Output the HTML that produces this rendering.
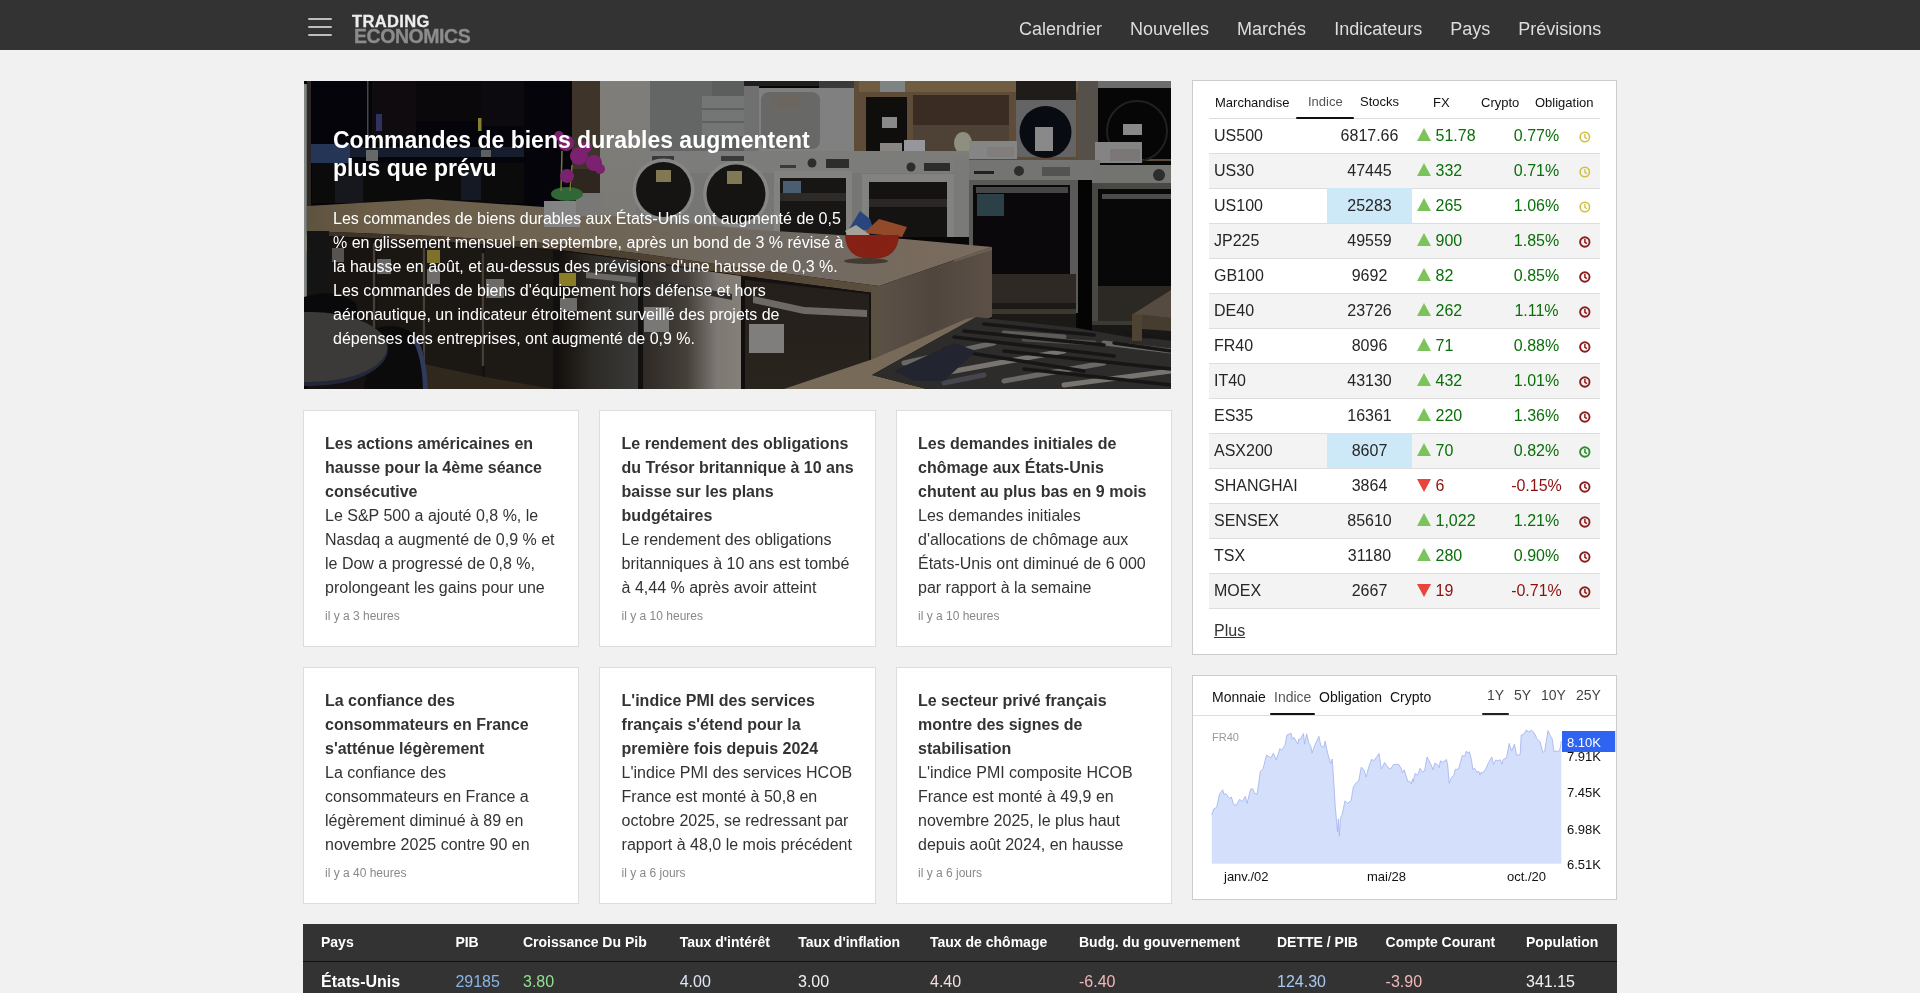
<!DOCTYPE html>
<html lang="fr">
<head>
<meta charset="utf-8">
<title>TRADING ECONOMICS | 20 millions INDICATEURS DE 196 PAYS</title>
<style>
*{box-sizing:border-box;margin:0;padding:0}
html,body{width:1920px;height:993px;overflow:hidden;background:#f1f1f1;font-family:"Liberation Sans",Arial,sans-serif;color:#333;font-size:16px;line-height:24px}
a{color:inherit;text-decoration:none}
.abs{position:absolute}
#wrap{position:absolute;left:0;top:0;width:1920px;height:993px;overflow:hidden;will-change:transform}
/* NAV */
#nav{position:absolute;left:0;top:0;width:1920px;height:50px;background:#333}
#burger{position:absolute;left:308px;top:18px;width:24px;height:19px}
#burger i{position:absolute;left:0;width:24px;height:2px;background:#bdbdbd;border-radius:1px}
#logo{position:absolute;left:352px;top:14px;font-weight:bold;line-height:15px}
#logo .t{display:block;font-size:16.5px;color:#ededed;height:15px;letter-spacing:0.38px;-webkit-text-stroke:0.3px #ededed}
#logo .e{display:block;font-size:19.5px;color:#8c8c8c;height:17px;margin-left:2px;letter-spacing:-0.45px;-webkit-text-stroke:0.3px #8c8c8c}
#menu{position:absolute;top:0;left:1005px;height:50px;display:flex}
#menu a{display:block;font-size:18px;line-height:20px;color:#ddd;padding:19px 14px 0 14px;white-space:nowrap}
/* HERO */
#hero{position:absolute;left:304px;top:81px;width:867px;height:308px;overflow:hidden;background:#2a2522}
#hero svg{position:absolute;left:0;top:0}
#hero h1{position:absolute;left:29px;top:45px;font-size:23px;line-height:28px;font-weight:bold;color:#fff;width:520px}
#hero p{position:absolute;left:29px;top:126px;width:520px;font-size:16px;line-height:24px;color:#fff}
/* CARDS */
.card{position:absolute;width:276px;height:237px;background:#fff;border:1px solid #ddd}
.card h3{position:absolute;left:21px;top:21px;width:234px;font-size:16px;line-height:24px;font-weight:bold;color:#333}
.card h3 span{font-weight:normal;display:block}
.card small{position:absolute;left:21px;top:196px;font-size:12px;line-height:18px;color:#888}
.c2 h3,.c2 small{left:21.6px}
/* MARKETS */
.panel{position:absolute;background:#fff;border:1px solid #ccc}
#mk{left:1192px;top:80px;width:425px;height:575px}
#mk .tabs a{position:absolute;top:13px;font-size:13px;line-height:18px;color:#111;white-space:nowrap}
#mk .hr{position:absolute;left:16px;top:37px;width:391px;height:1px;background:#ddd}
#mk .ul{position:absolute;left:103px;top:36px;width:58px;height:2px;background:#111;border-radius:1px}
#mt{position:absolute;left:16px;top:38px;width:391px;border-collapse:separate;border-spacing:0;font-size:16px;line-height:24px;color:#262626}
#mt tr{height:35px}
#mt td{border-bottom:1px solid #ddd;padding:0;white-space:nowrap;vertical-align:middle;height:35px}
#mt tr:nth-child(even) td{background:#f3f3f3}
#mt td.n{padding-left:5px;width:118px}
#mt td.v{text-align:center;width:85px}
#mt td.c{width:90px;padding-left:5px}
#mt td.p{text-align:center;width:69px}
#mt td.k{text-align:right;padding-right:9px}
#mt td.fl{background:#cde9f7 !important}
.up{color:#0a6e0a}.dn{color:#8b1010}
.tu,.td{display:inline-block;width:0;height:0;border-left:7px solid transparent;border-right:7px solid transparent;margin-right:4.5px;position:relative}
.tu{border-bottom:13px solid #7cc35c;top:0px}
.td{border-top:13px solid #e8453c;top:1px}
.ck{display:inline-block;vertical-align:middle}
#plus{position:absolute;left:21px;top:538px;font-size:16px;text-decoration:underline;color:#333}
/* CHART */
#ch{left:1192px;top:675px;width:425px;height:225px}
#ch .tabs a{position:absolute;font-size:14px;line-height:18px;color:#111;white-space:nowrap}
#ch svg{position:absolute;left:0;top:0}
/* TABLE */
#tb{position:absolute;left:303px;top:924px;width:1314px;height:80px;background:#333;color:#fff}
#tb .hl{position:absolute;left:0;top:37px;width:1314px;height:1px;background:#111}
#tb b{position:absolute;top:8px;font-size:14px;line-height:20px;white-space:nowrap;color:#fff}
#tb span{position:absolute;top:46px;font-size:16px;line-height:24px;white-space:nowrap}
</style>
</head>
<body>
<div id="wrap">
<div id="nav">
  <div id="burger"><i style="top:0"></i><i style="top:8px"></i><i style="top:16px"></i></div>
  <a id="logo"><span class="t">TRADING</span><span class="e">ECONOMICS</span></a>
  <div id="menu"><a>Calendrier</a><a>Nouvelles</a><a>Marchés</a><a>Indicateurs</a><a>Pays</a><a>Prévisions</a></div>
</div>

<div id="hero">
  <!--HS--><svg width="867" height="308" viewBox="0 0 867 308"><defs>
<filter id="hb" x="-2%" y="-2%" width="104%" height="104%" color-interpolation-filters="sRGB"><feGaussianBlur stdDeviation="0.7"/></filter>
<linearGradient id="gwall" x1="0" y1="0" x2="0" y2="1"><stop offset="0" stop-color="#7f7e7a"/><stop offset="1" stop-color="#7a7974"/></linearGradient>
<linearGradient id="gcnt" x1="0" y1="0" x2="1" y2="0"><stop offset="0" stop-color="#5e5240"/><stop offset="0.1" stop-color="#6c5e48"/><stop offset="0.4" stop-color="#6e6454"/><stop offset="0.72" stop-color="#706a64"/><stop offset="0.9" stop-color="#786a5c"/><stop offset="1" stop-color="#7a6c5e"/></linearGradient>
<linearGradient id="gedge" x1="0" y1="0" x2="1" y2="0"><stop offset="0" stop-color="#3a3024"/><stop offset="1" stop-color="#5c4e3d"/></linearGradient>
<linearGradient id="gdw1" x1="0" y1="0" x2="1" y2="0"><stop offset="0" stop-color="#14100c"/><stop offset="0.4" stop-color="#2d2a26"/><stop offset="1" stop-color="#3a3a38"/></linearGradient>
<linearGradient id="gdw2" x1="0" y1="0" x2="1" y2="0"><stop offset="0" stop-color="#2e2925"/><stop offset="0.45" stop-color="#46403a"/><stop offset="0.75" stop-color="#7d7873"/><stop offset="1" stop-color="#857f78"/></linearGradient>
<linearGradient id="gdw3" x1="0" y1="0" x2="0" y2="1"><stop offset="0" stop-color="#241f1b"/><stop offset="1" stop-color="#2a241e"/></linearGradient>
<linearGradient id="gisl" x1="0" y1="0" x2="1" y2="0"><stop offset="0" stop-color="#5c5248"/><stop offset="0.5" stop-color="#50463e"/><stop offset="1" stop-color="#5c5046"/></linearGradient>
</defs><g filter="url(#hb)"><rect x="0" y="0" width="867" height="308" fill="#080708"/><rect x="0" y="0" width="268" height="130" fill="#05040a"/><rect x="68" y="0" width="44" height="62" fill="#100b0e"/><rect x="112" y="0" width="66" height="40" fill="#0a080a"/><rect x="178" y="0" width="42" height="45" fill="#0d0a0f"/><rect x="8" y="82" width="212" height="40" fill="#0c0b0c"/><rect x="31" y="95" width="28" height="27" fill="#16181e"/><rect x="157" y="87" width="20" height="32" fill="#151923"/><rect x="3" y="63" width="43" height="19" fill="#253555"/><rect x="46" y="66" width="174" height="10" fill="#161e2e"/><rect x="62" y="69" width="12" height="11" fill="#686869"/><rect x="177" y="69" width="10" height="7" fill="#5f5f60"/><rect x="174" y="37" width="3.5" height="13" fill="#867f32"/><rect x="63" y="0" width="1.5" height="66" fill="#434546"/><rect x="72" y="33" width="6" height="17" fill="#2f325e"/><rect x="268" y="0" width="28" height="88" fill="#3e342a"/><rect x="268" y="88" width="28" height="42" fill="#2e261f"/><rect x="296" y="0" width="50" height="150" fill="url(#gwall)"/><rect x="346" y="0" width="62" height="75" fill="#646666"/><rect x="408" y="0" width="32" height="75" fill="#5c5e5e"/><rect x="398" y="15" width="42" height="40" fill="#747676"/><rect x="398" y="27" width="42" height="2" fill="#5e6062"/><rect x="398" y="40" width="42" height="2" fill="#5e6062"/><rect x="440" y="0" width="15" height="75" fill="#707070"/><rect x="440" y="0" width="75" height="5" fill="#201f1e"/><rect x="515" y="0" width="35" height="7" fill="#3a3a3a"/><rect x="455" y="7" width="95" height="65" fill="#808081"/><rect x="457" y="11" width="59" height="57" rx="8" fill="#686866"/><rect x="470" y="14" width="27" height="14" fill="#6b6760"/><rect x="550" y="0" width="320" height="80" fill="#5e4c38"/><rect x="555" y="0" width="315" height="11" fill="#705c40"/><rect x="576" y="0" width="25" height="11" fill="#7e8383"/><rect x="562" y="16" width="41" height="54" fill="#0f0e0d"/><rect x="578" y="36" width="15" height="11" fill="#898989"/><rect x="609" y="14" width="96" height="46" fill="#3a2c22"/><rect x="609" y="44" width="96" height="28" fill="#4e4236"/><rect x="576" y="62" width="22" height="11" fill="#898684"/><rect x="600" y="59" width="21" height="14" fill="#96969b"/><ellipse cx="659" cy="62" rx="9" ry="11" fill="#8f8f80"/><rect x="712" y="0" width="60" height="19" fill="#201c1a"/><rect x="712" y="19" width="60" height="57" fill="#646464"/><circle cx="741.5" cy="51" r="26" fill="#080b11"/><rect x="731" y="46" width="18" height="24" fill="#898989"/><rect x="774" y="0" width="20" height="80" fill="#555049"/><rect x="794" y="0" width="73" height="7" fill="#6c6c6a"/><rect x="794" y="7" width="73" height="71" fill="#060606"/><circle cx="833" cy="50" r="30" fill="none" stroke="#212121" stroke-width="2"/><rect x="819" y="43" width="19" height="11" fill="#898989"/><rect x="665" y="60" width="48" height="18" fill="#858585"/><rect x="791" y="61" width="47" height="21" fill="#848484"/><rect x="683" y="66" width="27" height="10" fill="#827d7d"/><rect x="806" y="68" width="30" height="12" fill="#7c7777"/><rect x="332" y="70" width="333" height="86" fill="#767674"/><rect x="332" y="70" width="333" height="22" fill="#7c7c7a"/><rect x="348" y="75" width="22" height="5" fill="#3a3a3a"/><rect x="417" y="75" width="23" height="5" fill="#3a3a3a"/><circle cx="359.5" cy="108.5" r="31" fill="#868684"/><circle cx="359.5" cy="108.5" r="27.5" fill="#161413"/><circle cx="432" cy="113" r="33" fill="#868684"/><circle cx="432" cy="113" r="29.5" fill="#161413"/><rect x="352" y="89" width="15" height="12" fill="#817854"/><rect x="423" y="90" width="15" height="13" fill="#817854"/><rect x="522" y="78" width="23" height="9" fill="#2d2d2d"/><rect x="620" y="82" width="26" height="8" fill="#2d2d2d"/><rect x="476" y="84" width="16" height="3" fill="#3a3a3a"/><circle cx="508" cy="82" r="4.5" fill="#2d2d2d"/><circle cx="607" cy="86" r="4.5" fill="#2d2d2d"/><rect x="470" y="90" width="78" height="66" fill="#828280"/><rect x="476" y="97" width="66" height="59" fill="#171615"/><rect x="558" y="93" width="92" height="63" fill="#828280"/><rect x="565" y="101" width="78" height="55" fill="#141312"/><rect x="476" y="112" width="66" height="8" fill="#2d2a28"/><rect x="565" y="118" width="78" height="8" fill="#2a2726"/><rect x="479" y="100" width="18" height="12" fill="#4a5e71"/><rect x="650" y="76" width="15" height="80" fill="#7a7a78"/><rect x="665" y="79" width="131" height="20" fill="#747472"/><rect x="788" y="84" width="79" height="18" fill="#737370"/><rect x="665" y="99" width="109" height="133" fill="#5a5a58"/><rect x="669" y="104" width="97" height="89" fill="#0a080a"/><rect x="672" y="106" width="92" height="6" fill="#464646"/><rect x="668" y="193" width="104" height="29" fill="#2e2925"/><rect x="688" y="222" width="84" height="28" fill="#1c1a17"/><rect x="788" y="236" width="79" height="24" fill="#1a1816"/><rect x="788" y="238" width="42" height="6" fill="#3c3a34"/><rect x="688" y="228" width="84" height="5" fill="#3c3830"/><rect x="774" y="99" width="14" height="151" fill="#040404"/><rect x="788" y="102" width="79" height="138" fill="#4a4845"/><rect x="794" y="108" width="73" height="97" fill="#090809"/><rect x="798" y="113" width="69" height="5" fill="#4b4b4b"/><rect x="794" y="205" width="73" height="35" fill="#2c2824"/><rect x="673" y="113" width="27" height="22" fill="#2c4048"/><rect x="738" y="86" width="28" height="9" fill="#535353"/><circle cx="715" cy="90" r="5" fill="#2d2d2d"/><circle cx="855" cy="94" r="6" fill="#2d2d2d"/><rect x="670" y="90" width="20" height="3" fill="#212121"/><polygon points="3,125 124,118 268,128 300,134 440,148 600,158 688,166 575,205 440,187 340,173 256,163 130,155 3,150" fill="url(#gcnt)"/><polygon points="3,150 130,155 256,163 340,173 440,187 575,205 569,212 440,195 340,180 256,169 130,160 3,154" fill="url(#gedge)"/><polygon points="3,154 130,160 256,169 340,180 440,195 569,212 569,308 3,308" fill="#141110"/><polygon points="25,156 68,158 68,280 25,270" fill="#181411"/><polygon points="73,158 119,160 119,290 73,282" fill="#1a1612"/><polygon points="122,161 178,164 178,300 122,292" fill="#1b1713"/><polygon points="181,165 249,169 249,308 181,304" fill="#1d1915"/><polygon points="255,170 334,180 334,308 255,308" fill="url(#gdw1)"/><polygon points="339,181 437,195 437,308 339,308" fill="url(#gdw2)"/><polygon points="441,199 565,213 565,308 441,308" fill="url(#gdw3)"/><rect x="68.8" y="162.3" width="2.4" height="122.7" fill="#453f38"/><rect x="118.8" y="166.8" width="2.4" height="118.2" fill="#453f38"/><rect x="177.8" y="172.11" width="2.4" height="112.89" fill="#453f38"/><rect x="249" y="170" width="6" height="138" fill="#12100e"/><rect x="334" y="181" width="5" height="127" fill="#12100e"/><rect x="437" y="198" width="4" height="110" fill="#100e0d"/><polygon points="282,191 332,196 332,202 282,197" fill="#6b6865"/><polygon points="350,199 428,213 428,219 350,204" fill="#2d2c2a"/><polygon points="449,215 500,226 563,229 563,236 500,233 449,222" fill="#6d6a66"/><rect x="28" y="167" width="12" height="14" fill="#565453"/><rect x="73" y="178" width="14" height="15" fill="#676666"/><rect x="123" y="169" width="13" height="13" fill="#7f702a"/><rect x="123" y="188" width="13" height="15" fill="#6e6d6c"/><rect x="182" y="198" width="18" height="19" fill="#6b6a69"/><rect x="255" y="192" width="17" height="13" fill="#8b7c27"/><rect x="256" y="217" width="17" height="13" fill="#6e6c6b"/><rect x="340" y="226" width="25" height="25" fill="#797877"/><rect x="445" y="243" width="35" height="29" fill="#807e7d"/><rect x="0" y="154" width="4" height="16" fill="#867c2c"/><polygon points="100,286 249,308 100,308" fill="#30281c"/><polygon points="120,283 181,296 249,308 120,308" fill="#30281c"/><rect x="0" y="3" width="2.8" height="213" fill="#828784"/><rect x="3" y="0" width="4" height="125" fill="#2e2824"/><rect x="3" y="150" width="22" height="90" fill="#141415"/><path d="M0 216 Q30 206 52 222 L56 250 L0 250Z" fill="#09090b"/><path d="M70 248 Q100 238 118 262 L124 308 L60 308Z" fill="#0b0b0c"/><path d="M112 256 Q122 270 124 308 L119 308 Q118 275 108 258Z" fill="#303a5b"/><ellipse cx="6" cy="268" rx="78" ry="37" fill="#22283a"/><ellipse cx="6" cy="266" rx="77" ry="35" fill="#3c3a38"/><polygon points="575,205 688,166 688,236 569,280" fill="url(#gisl)"/><polygon points="567,205 575,205 575,278 567,281" fill="#5a5040"/><polygon points="688,166 650,179 650,181 688,169" fill="#695f53"/><polygon points="480,308 569,278 662,238 672,236 568,294 623,308" fill="#786a58"/><polygon points="568,294 672,236 773,247 829,257 867,258 867,308 623,308" fill="#2d2c2a"/><line x1="600" y1="282" x2="690" y2="262" stroke="#6b6965" stroke-width="5" stroke-linecap="round"/><line x1="640" y1="292" x2="760" y2="270" stroke="#787571" stroke-width="5" stroke-linecap="round"/><line x1="700" y1="300" x2="800" y2="282" stroke="#6b6965" stroke-width="5" stroke-linecap="round"/><line x1="760" y1="304" x2="867" y2="290" stroke="#787571" stroke-width="5" stroke-linecap="round"/><line x1="700" y1="252" x2="760" y2="256" stroke="#5f5c58" stroke-width="5" stroke-linecap="round"/><line x1="800" y1="262" x2="867" y2="270" stroke="#6b6965" stroke-width="5" stroke-linecap="round"/><line x1="640" y1="302" x2="680" y2="294" stroke="#46464e" stroke-width="5" stroke-linecap="round"/><line x1="720" y1="258" x2="790" y2="262" stroke="#52504c" stroke-width="5" stroke-linecap="round"/><line x1="680" y1="243" x2="790" y2="254" stroke="#171616" stroke-width="3.5" stroke-linecap="round"/><line x1="660" y1="250" x2="800" y2="264" stroke="#171616" stroke-width="3.5" stroke-linecap="round"/><line x1="650" y1="256" x2="810" y2="275" stroke="#171616" stroke-width="3.5" stroke-linecap="round"/><line x1="700" y1="270" x2="867" y2="288" stroke="#171616" stroke-width="3.5" stroke-linecap="round"/><line x1="640" y1="268" x2="780" y2="290" stroke="#171616" stroke-width="3.5" stroke-linecap="round"/><line x1="720" y1="288" x2="867" y2="304" stroke="#171616" stroke-width="3.5" stroke-linecap="round"/><line x1="820" y1="252" x2="867" y2="258" stroke="#171616" stroke-width="3.5" stroke-linecap="round"/><line x1="810" y1="262" x2="867" y2="270" stroke="#171616" stroke-width="3.5" stroke-linecap="round"/><polygon points="590,290 650,262 672,270 640,300 610,300" fill="#22252f"/><polygon points="829,233 867,237 867,250 838,248 829,247" fill="#463c30"/><rect x="828" y="233" width="10" height="27" fill="#4e4232"/><polygon points="829,233 867,209 867,237" fill="#554b41"/><rect x="240" y="120" width="36" height="26" fill="#838383"/><rect x="272" y="112" width="25" height="23" fill="#787877"/><ellipse cx="263" cy="113" rx="16" ry="7" fill="#2f6836"/><path d="M257 110 L258 70 M266 110 L268 84" stroke="#777735" stroke-width="1.5" fill="none"/><circle cx="262" cy="62" r="8" fill="#7b216f"/><circle cx="275" cy="75" r="9" fill="#7b216f"/><circle cx="290" cy="82" r="8" fill="#7b216f"/><circle cx="263" cy="95" r="7" fill="#7b216f"/><circle cx="255" cy="55" r="5" fill="#7b216f"/><circle cx="282" cy="66" r="6" fill="#7b216f"/><circle cx="296" cy="88" r="5" fill="#7b216f"/><polygon points="545,148 556,130 566,138 570,150" fill="#28467b"/><polygon points="560,152 575,138 603,146 598,156" fill="#934a2a"/><polygon points="541,150 552,144 566,154 545,156" fill="#a7a298"/><path d="M541 154 L595 154 Q594 178 568 178 Q542 178 541 154Z" fill="#842114"/><ellipse cx="562" cy="180" rx="22" ry="3" fill="#443a31"/></g></svg><!--HE-->
  <h1>Commandes de biens durables augmentent plus que prévu</h1>
  <p>Les commandes de biens durables aux États-Unis ont augmenté de 0,5 % en glissement mensuel en septembre, après un bond de 3 % révisé à la hausse en août, et au-dessus des prévisions d'une hausse de 0,3 %. Les commandes de biens d'équipement hors défense et hors aéronautique, un indicateur étroitement surveillé des projets de dépenses des entreprises, ont augmenté de 0,9 %.</p>
</div>

<div class="card" style="left:303px;top:410px"><h3>Les actions américaines en hausse pour la 4ème séance consécutive<span>Le S&amp;P 500 a ajouté 0,8 %, le Nasdaq a augmenté de 0,9 % et le Dow a progressé de 0,8 %, prolongeant les gains pour une</span></h3><small>il y a 3 heures</small></div>
<div class="card c2" style="left:599px;top:410px;width:277px"><h3>Le rendement des obligations du Trésor britannique à 10 ans baisse sur les plans budgétaires<span>Le rendement des obligations britanniques à 10 ans est tombé à 4,44 % après avoir atteint</span></h3><small>il y a 10 heures</small></div>
<div class="card" style="left:896px;top:410px"><h3>Les demandes initiales de chômage aux États-Unis chutent au plus bas en 9 mois<span>Les demandes initiales d'allocations de chômage aux États-Unis ont diminué de 6 000 par rapport à la semaine</span></h3><small>il y a 10 heures</small></div>
<div class="card" style="left:303px;top:667px"><h3>La confiance des consommateurs en France s'atténue légèrement<span>La confiance des consommateurs en France a légèrement diminué à 89 en novembre 2025 contre 90 en</span></h3><small>il y a 40 heures</small></div>
<div class="card c2" style="left:599px;top:667px;width:277px"><h3>L'indice PMI des services français s'étend pour la première fois depuis 2024<span>L'indice PMI des services HCOB France est monté à 50,8 en octobre 2025, se redressant par rapport à 48,0 le mois précédent</span></h3><small>il y a 6 jours</small></div>
<div class="card" style="left:896px;top:667px"><h3>Le secteur privé français montre des signes de stabilisation<span>L'indice PMI composite HCOB France est monté à 49,9 en novembre 2025, le plus haut depuis août 2024, en hausse</span></h3><small>il y a 6 jours</small></div>

<div class="panel" id="mk">
  <div class="tabs">
    <a style="left:22px">Marchandise</a><a style="left:115px;top:12px;color:#555">Indice</a><a style="left:167px;top:12px">Stocks</a><a style="left:240px">FX</a><a style="left:288px">Crypto</a><a style="left:342px">Obligation</a>
  </div>
  <div class="hr"></div><div class="ul"></div>
  <table id="mt"><tbody>
  <tr><td class="n">US500</td><td class="v">6817.66</td><td class="c up"><i class="tu"></i>51.78</td><td class="p up">0.77%</td><td class="k"><svg class="ck" width="12" height="12" viewBox="0 0 12 12"><circle cx="5.8" cy="6" r="4.7" fill="none" stroke="#cfc043" stroke-width="1.6"/><path d="M5.9 2.9V6.3L7.9 7.7" fill="none" stroke="#cfc043" stroke-width="1.3"/></svg></td></tr>
  <tr><td class="n">US30</td><td class="v" style="border-bottom-color:#cde9f7">47445</td><td class="c up"><i class="tu"></i>332</td><td class="p up">0.71%</td><td class="k"><svg class="ck" width="12" height="12" viewBox="0 0 12 12"><circle cx="5.8" cy="6" r="4.7" fill="none" stroke="#cfc043" stroke-width="1.6"/><path d="M5.9 2.9V6.3L7.9 7.7" fill="none" stroke="#cfc043" stroke-width="1.3"/></svg></td></tr>
  <tr><td class="n">US100</td><td class="v fl">25283</td><td class="c up"><i class="tu"></i>265</td><td class="p up">1.06%</td><td class="k"><svg class="ck" width="12" height="12" viewBox="0 0 12 12"><circle cx="5.8" cy="6" r="4.7" fill="none" stroke="#cfc043" stroke-width="1.6"/><path d="M5.9 2.9V6.3L7.9 7.7" fill="none" stroke="#cfc043" stroke-width="1.3"/></svg></td></tr>
  <tr><td class="n">JP225</td><td class="v">49559</td><td class="c up"><i class="tu"></i>900</td><td class="p up">1.85%</td><td class="k"><svg class="ck" width="12" height="12" viewBox="0 0 12 12"><circle cx="5.8" cy="6" r="4.7" fill="none" stroke="#8e1c1c" stroke-width="1.9"/><path d="M5.9 2.9V6.3L7.9 7.7" fill="none" stroke="#8e1c1c" stroke-width="1.5"/></svg></td></tr>
  <tr><td class="n">GB100</td><td class="v">9692</td><td class="c up"><i class="tu"></i>82</td><td class="p up">0.85%</td><td class="k"><svg class="ck" width="12" height="12" viewBox="0 0 12 12"><circle cx="5.8" cy="6" r="4.7" fill="none" stroke="#8e1c1c" stroke-width="1.9"/><path d="M5.9 2.9V6.3L7.9 7.7" fill="none" stroke="#8e1c1c" stroke-width="1.5"/></svg></td></tr>
  <tr><td class="n">DE40</td><td class="v">23726</td><td class="c up"><i class="tu"></i>262</td><td class="p up">1.11%</td><td class="k"><svg class="ck" width="12" height="12" viewBox="0 0 12 12"><circle cx="5.8" cy="6" r="4.7" fill="none" stroke="#8e1c1c" stroke-width="1.9"/><path d="M5.9 2.9V6.3L7.9 7.7" fill="none" stroke="#8e1c1c" stroke-width="1.5"/></svg></td></tr>
  <tr><td class="n">FR40</td><td class="v">8096</td><td class="c up"><i class="tu"></i>71</td><td class="p up">0.88%</td><td class="k"><svg class="ck" width="12" height="12" viewBox="0 0 12 12"><circle cx="5.8" cy="6" r="4.7" fill="none" stroke="#8e1c1c" stroke-width="1.9"/><path d="M5.9 2.9V6.3L7.9 7.7" fill="none" stroke="#8e1c1c" stroke-width="1.5"/></svg></td></tr>
  <tr><td class="n">IT40</td><td class="v">43130</td><td class="c up"><i class="tu"></i>432</td><td class="p up">1.01%</td><td class="k"><svg class="ck" width="12" height="12" viewBox="0 0 12 12"><circle cx="5.8" cy="6" r="4.7" fill="none" stroke="#8e1c1c" stroke-width="1.9"/><path d="M5.9 2.9V6.3L7.9 7.7" fill="none" stroke="#8e1c1c" stroke-width="1.5"/></svg></td></tr>
  <tr><td class="n">ES35</td><td class="v" style="border-bottom-color:#cde9f7">16361</td><td class="c up"><i class="tu"></i>220</td><td class="p up">1.36%</td><td class="k"><svg class="ck" width="12" height="12" viewBox="0 0 12 12"><circle cx="5.8" cy="6" r="4.7" fill="none" stroke="#8e1c1c" stroke-width="1.9"/><path d="M5.9 2.9V6.3L7.9 7.7" fill="none" stroke="#8e1c1c" stroke-width="1.5"/></svg></td></tr>
  <tr><td class="n">ASX200</td><td class="v fl">8607</td><td class="c up"><i class="tu"></i>70</td><td class="p up">0.82%</td><td class="k"><svg class="ck" width="12" height="12" viewBox="0 0 12 12"><circle cx="5.8" cy="6" r="4.7" fill="none" stroke="#2e8b2e" stroke-width="1.9"/><path d="M5.9 2.9V6.3L7.9 7.7" fill="none" stroke="#2e8b2e" stroke-width="1.5"/></svg></td></tr>
  <tr><td class="n">SHANGHAI</td><td class="v">3864</td><td class="c dn"><i class="td"></i>6</td><td class="p dn">-0.15%</td><td class="k"><svg class="ck" width="12" height="12" viewBox="0 0 12 12"><circle cx="5.8" cy="6" r="4.7" fill="none" stroke="#8e1c1c" stroke-width="1.9"/><path d="M5.9 2.9V6.3L7.9 7.7" fill="none" stroke="#8e1c1c" stroke-width="1.5"/></svg></td></tr>
  <tr><td class="n">SENSEX</td><td class="v">85610</td><td class="c up"><i class="tu"></i>1,022</td><td class="p up">1.21%</td><td class="k"><svg class="ck" width="12" height="12" viewBox="0 0 12 12"><circle cx="5.8" cy="6" r="4.7" fill="none" stroke="#8e1c1c" stroke-width="1.9"/><path d="M5.9 2.9V6.3L7.9 7.7" fill="none" stroke="#8e1c1c" stroke-width="1.5"/></svg></td></tr>
  <tr><td class="n">TSX</td><td class="v">31180</td><td class="c up"><i class="tu"></i>280</td><td class="p up">0.90%</td><td class="k"><svg class="ck" width="12" height="12" viewBox="0 0 12 12"><circle cx="5.8" cy="6" r="4.7" fill="none" stroke="#8e1c1c" stroke-width="1.9"/><path d="M5.9 2.9V6.3L7.9 7.7" fill="none" stroke="#8e1c1c" stroke-width="1.5"/></svg></td></tr>
  <tr><td class="n">MOEX</td><td class="v">2667</td><td class="c dn"><i class="td"></i>19</td><td class="p dn">-0.71%</td><td class="k"><svg class="ck" width="12" height="12" viewBox="0 0 12 12"><circle cx="5.8" cy="6" r="4.7" fill="none" stroke="#8e1c1c" stroke-width="1.9"/><path d="M5.9 2.9V6.3L7.9 7.7" fill="none" stroke="#8e1c1c" stroke-width="1.5"/></svg></td></tr>
  </tbody></table>
  <a id="plus">Plus</a>
</div>

<div class="panel" id="ch">
  <!--CS--><div class="tabs">
    <a style="left:19px;top:12px">Monnaie</a><a style="left:81px;top:12px;color:#555">Indice</a><a style="left:126px;top:12px">Obligation</a><a style="left:197px;top:12px">Crypto</a>
    <a style="left:294px;top:10px;color:#444">1Y</a><a style="left:321px;top:10px;color:#444">5Y</a><a style="left:348px;top:10px;color:#444">10Y</a><a style="left:383px;top:10px;color:#444">25Y</a>
  </div>
  <div style="position:absolute;left:0;top:39px;width:423px;height:1px;background:#ddd"></div>
  <div style="position:absolute;left:77px;top:37px;width:45px;height:2px;background:#111;border-radius:1px"></div>
  <div style="position:absolute;left:289px;top:37px;width:27px;height:2px;background:#222;border-radius:1px"></div>
  <svg width="423" height="222" viewBox="0 0 423 222" style="top:1px">
    <path d="M18.8 138.2 L20.6 132.1 L23.6 130.3 L26.6 117.0 L29.7 112.8 L31.2 117.8 L32.4 116.3 L36.5 121.2 L38.4 120.0 L40.5 127.6 L43.3 128.3 L46.6 122.3 L49.3 124.6 L52.3 119.3 L54.1 126.4 L57.6 112.2 L59.6 111.7 L61.7 116.3 L64.1 117.3 L67.4 94.4 L70.1 91.6 L73.5 78.0 L78.0 80.8 L80.4 76.2 L83.3 83.0 L86.8 71.7 L88.6 73.2 L91.9 68.7 L93.9 58.1 L98.1 56.3 L99.4 62.3 L101.0 60.4 L104.9 67.2 L105.9 61.9 L107.0 62.6 L110.5 56.6 L111.5 67.2 L113.6 56.9 L115.8 65.7 L118.0 70.2 L119.1 76.2 L121.0 70.2 L125.9 59.3 L127.8 68.7 L130.9 70.2 L132.1 64.1 L134.6 76.2 L137.7 86.8 L139.2 82.0 L140.7 103.4 L142.2 129.1 L144.5 154.8 L145.4 141.9 L146.3 159.3 L147.5 140.4 L149.0 138.2 L152.0 123.8 L154.3 126.4 L158.1 123.8 L160.3 110.2 L162.6 106.4 L165.6 104.2 L168.3 90.1 L170.9 92.8 L173.2 100.1 L175.4 91.3 L178.5 82.3 L180.7 83.8 L183.7 80.0 L186.0 76.5 L188.3 92.1 L191.6 85.6 L195.1 90.6 L197.6 92.1 L200.4 87.6 L204.9 87.3 L205.9 87.6 L208.1 91.3 L209.4 95.9 L211.2 92.8 L214.9 104.9 L216.5 104.2 L218.4 107.2 L219.5 101.9 L220.2 104.9 L222.0 96.6 L224.8 98.1 L227.0 91.3 L229.3 95.1 L231.6 93.6 L234.1 80.0 L237.6 86.8 L240.2 92.8 L241.7 86.1 L244.4 87.6 L246.2 90.6 L247.4 83.8 L249.7 85.3 L253.5 82.6 L254.7 88.3 L256.2 106.4 L258.0 101.2 L260.7 98.6 L262.2 92.5 L265.5 92.1 L269.3 78.5 L271.6 79.3 L273.4 74.0 L274.9 76.2 L276.4 74.7 L278.4 82.3 L279.9 92.8 L281.4 91.0 L283.7 95.1 L285.9 94.4 L287.0 98.1 L288.2 95.1 L289.7 96.2 L292.7 92.1 L295.0 86.8 L298.8 80.0 L300.6 87.6 L302.6 83.0 L305.6 83.8 L307.1 82.6 L309.1 87.1 L310.1 82.6 L313.6 80.8 L316.2 66.4 L318.7 74.0 L321.4 67.2 L323.7 78.5 L327.2 77.4 L328.2 58.1 L330.5 57.4 L333.5 52.8 L335.0 55.1 L338.8 53.3 L341.1 55.8 L344.1 61.9 L347.1 64.9 L349.8 75.5 L351.7 74.0 L355.0 53.6 L356.9 58.1 L359.2 61.9 L361.0 74.7 L363.0 74.0 L366.0 74.4 L367.5 70.2 L368.3 64.1 L368.3 186.7 L18.8 186.7 Z" fill="#d4dffc"/>
    <path d="M18.8 138.2 L20.6 132.1 L23.6 130.3 L26.6 117.0 L29.7 112.8 L31.2 117.8 L32.4 116.3 L36.5 121.2 L38.4 120.0 L40.5 127.6 L43.3 128.3 L46.6 122.3 L49.3 124.6 L52.3 119.3 L54.1 126.4 L57.6 112.2 L59.6 111.7 L61.7 116.3 L64.1 117.3 L67.4 94.4 L70.1 91.6 L73.5 78.0 L78.0 80.8 L80.4 76.2 L83.3 83.0 L86.8 71.7 L88.6 73.2 L91.9 68.7 L93.9 58.1 L98.1 56.3 L99.4 62.3 L101.0 60.4 L104.9 67.2 L105.9 61.9 L107.0 62.6 L110.5 56.6 L111.5 67.2 L113.6 56.9 L115.8 65.7 L118.0 70.2 L119.1 76.2 L121.0 70.2 L125.9 59.3 L127.8 68.7 L130.9 70.2 L132.1 64.1 L134.6 76.2 L137.7 86.8 L139.2 82.0 L140.7 103.4 L142.2 129.1 L144.5 154.8 L145.4 141.9 L146.3 159.3 L147.5 140.4 L149.0 138.2 L152.0 123.8 L154.3 126.4 L158.1 123.8 L160.3 110.2 L162.6 106.4 L165.6 104.2 L168.3 90.1 L170.9 92.8 L173.2 100.1 L175.4 91.3 L178.5 82.3 L180.7 83.8 L183.7 80.0 L186.0 76.5 L188.3 92.1 L191.6 85.6 L195.1 90.6 L197.6 92.1 L200.4 87.6 L204.9 87.3 L205.9 87.6 L208.1 91.3 L209.4 95.9 L211.2 92.8 L214.9 104.9 L216.5 104.2 L218.4 107.2 L219.5 101.9 L220.2 104.9 L222.0 96.6 L224.8 98.1 L227.0 91.3 L229.3 95.1 L231.6 93.6 L234.1 80.0 L237.6 86.8 L240.2 92.8 L241.7 86.1 L244.4 87.6 L246.2 90.6 L247.4 83.8 L249.7 85.3 L253.5 82.6 L254.7 88.3 L256.2 106.4 L258.0 101.2 L260.7 98.6 L262.2 92.5 L265.5 92.1 L269.3 78.5 L271.6 79.3 L273.4 74.0 L274.9 76.2 L276.4 74.7 L278.4 82.3 L279.9 92.8 L281.4 91.0 L283.7 95.1 L285.9 94.4 L287.0 98.1 L288.2 95.1 L289.7 96.2 L292.7 92.1 L295.0 86.8 L298.8 80.0 L300.6 87.6 L302.6 83.0 L305.6 83.8 L307.1 82.6 L309.1 87.1 L310.1 82.6 L313.6 80.8 L316.2 66.4 L318.7 74.0 L321.4 67.2 L323.7 78.5 L327.2 77.4 L328.2 58.1 L330.5 57.4 L333.5 52.8 L335.0 55.1 L338.8 53.3 L341.1 55.8 L344.1 61.9 L347.1 64.9 L349.8 75.5 L351.7 74.0 L355.0 53.6 L356.9 58.1 L359.2 61.9 L361.0 74.7 L363.0 74.0 L366.0 74.4 L367.5 70.2 L368.3 64.1" fill="none" stroke="#a9b8ee" stroke-width="0.9" stroke-linejoin="round"/>
    <rect x="369" y="54" width="53.2" height="21" fill="#2f63f2"/>
    <g font-family="Liberation Sans, Arial, sans-serif" font-size="13">
      <text x="19" y="64" font-size="11" fill="#999">FR40</text>
      <text x="374" y="70" fill="#fff">8.10K</text>
      <text x="374" y="83.5" fill="#111">7.91K</text>
      <text x="374" y="119.5" fill="#111">7.45K</text>
      <text x="374" y="157.3" fill="#111">6.98K</text>
      <text x="374" y="192.3" fill="#111">6.51K</text>
      <text x="31" y="203.5" fill="#111">janv./02</text>
      <text x="174" y="203.5" fill="#111">mai/28</text>
      <text x="314" y="203.5" fill="#111">oct./20</text>
    </g>
  </svg><!--CE-->
</div>

<div id="tb">
  <div class="hl"></div>
  <b style="left:18px">Pays</b><b style="left:152.4px">PIB</b><b style="left:220px">Croissance Du Pib</b><b style="left:376.7px">Taux d'intérêt</b><b style="left:495.3px">Taux d'inflation</b><b style="left:627px">Taux de chômage</b><b style="left:776px">Budg. du gouvernement</b><b style="left:974px">DETTE / PIB</b><b style="left:1082.6px">Compte Courant</b><b style="left:1223px">Population</b>
  <span style="left:18px;font-weight:bold">États-Unis</span><span style="left:152.4px;color:#8ab4e8">29185</span><span style="left:220px;color:#90e090">3.80</span><span style="left:376.7px;color:#dde6f5">4.00</span><span style="left:495px;color:#f5f0f0">3.00</span><span style="left:627px;color:#f3dede">4.40</span><span style="left:776px;color:#f0b8b8">-6.40</span><span style="left:974px;color:#a9c8ef">124.30</span><span style="left:1082.6px;color:#f0b8b8">-3.90</span><span style="left:1223px;color:#f2f2f2">341.15</span>
</div>
</div>
</body>
</html>
